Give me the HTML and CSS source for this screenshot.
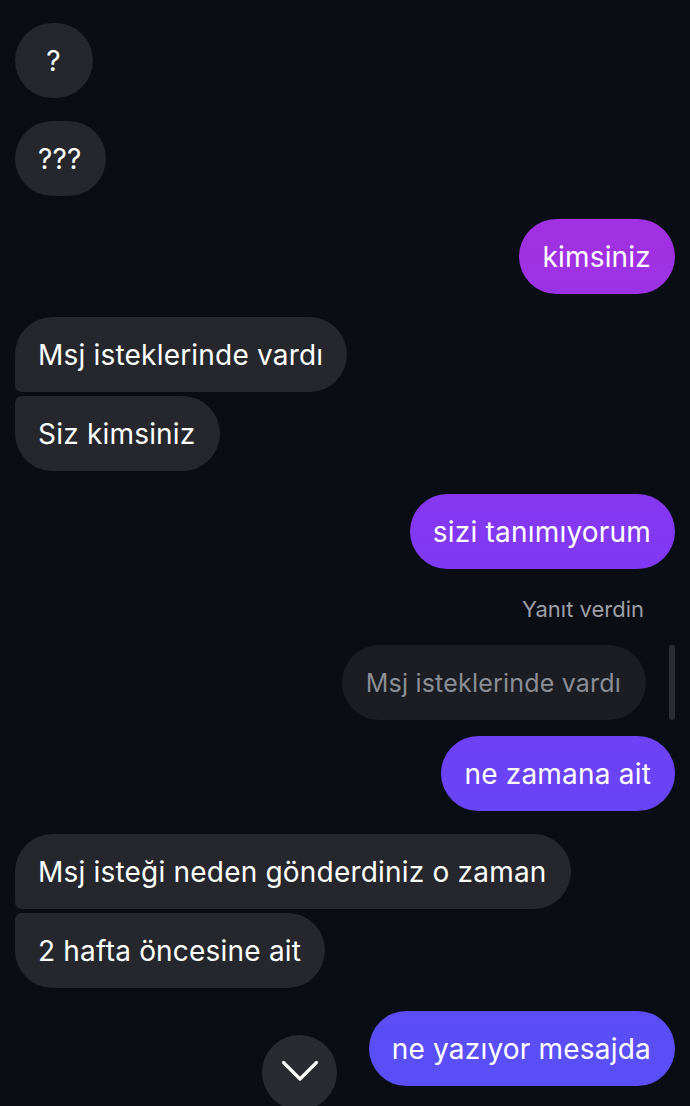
FILE: index.html
```html
<!DOCTYPE html>
<html lang="tr">
	<head>
		<meta charset="utf-8">
		<title>Sohbet</title>
		<link rel="stylesheet" href="styles.css">
	</head>
	<body>
		<div class="thread">
			<div class="row in"><div class="bubble solo round">?</div></div>
			<div class="row in gap"><div class="bubble solo round">???</div></div>
			<div class="row out gap"><div class="bubble">kimsiniz</div></div>

			<div class="row in gap"><div class="bubble first">Msj isteklerinde vardı</div></div>
			<div class="row in tight"><div class="bubble last">Siz kimsiniz</div></div>

			<div class="row out gap"><div class="bubble">sizi tanımıyorum</div></div>

			<div class="reply">
				<div class="reply-label">Yanıt verdin</div>
				<div class="reply-row">
					<div class="bubble quoted">Msj isteklerinde vardı</div>
					<div class="reply-bar"></div>
				</div>
			</div>
			<div class="row out near"><div class="bubble">ne zamana ait</div></div>

			<div class="row in gap"><div class="bubble first">Msj isteği neden gönderdiniz o zaman</div></div>
			<div class="row in tight"><div class="bubble last">2 hafta öncesine ait</div></div>

			<div class="row out gap"><div class="bubble">ne yazıyor mesajda</div></div>
		</div>

		<button class="jump" aria-label="En alta git">
			<svg width="38" height="22" viewBox="0 0 38 22"><path d="M2.5 2.5 L19 19 L35.5 2.5" fill="none" stroke="#fff" stroke-width="3.2" stroke-linecap="round" stroke-linejoin="round"/></svg>
		</button>
	</body>
</html>
```

FILE: styles.css
```css
html, body {
	margin: 0;
	height: 100%;
	overflow: hidden;
	background-color: #0b0d14;
	color: #fff;
	font-family: Inter, 'Noto Sans', sans-serif;
}
.thread {
	display: flex;
	flex-direction: column;
	padding: 23px 15px 0 15px;
}
.row {
	display: flex;
}
.row.in {
	justify-content: flex-start;
}
.row.out {
	justify-content: flex-end;
}
.gap {
	margin-top: 23px;
}
.tight {
	margin-top: 4px;
}
.near {
	margin-top: 16px;
}
.bubble {
	height: 75px;
	box-sizing: border-box;
	padding: 0 24px 0 23px;
	display: flex;
	align-items: center;
	font-size: 28px;
	letter-spacing: 0.2px;
	border-radius: 38px;
	white-space: nowrap;
}
.in .bubble {
	background-color: #25272c;
}
.in .bubble.first {
	border-radius: 38px 38px 38px 7px;
}
.in .bubble.last {
	border-radius: 7px 38px 38px 38px;
}
.bubble.round {
	min-width: 78px;
	justify-content: center;
}
.out .bubble {
	background-image: linear-gradient(to bottom, #a631e2 0%, #a031e3 23%, #8338f2 48%, #6a43f5 70%, #5a4ef6 95%);
	background-attachment: fixed;
}
.reply {
	margin-top: 27px;
	display: flex;
	flex-direction: column;
	align-items: flex-end;
}
.reply-label {
	font-size: 22px;
	color: #9d9fa6;
	margin-right: 31px;
	line-height: 26px;
}
.reply-row {
	display: flex;
	align-items: stretch;
	gap: 23px;
	margin-top: 23px;
}
.bubble.quoted {
	background-color: #1b1d23;
	color: #8c8e95;
	font-size: 25px;
	padding: 0 25px 0 24px;
}
.reply-bar {
	width: 6px;
	border-radius: 3px;
	background-color: #2b2d33;
}
.jump {
	position: absolute;
	left: 262px;
	top: 1035px;
	width: 75px;
	height: 75px;
	border: 0;
	border-radius: 50%;
	background-color: #2a2b30;
	padding: 0;
	display: flex;
	align-items: center;
	justify-content: center;
}
.jump svg {
	margin-bottom: 3px;
}
```
